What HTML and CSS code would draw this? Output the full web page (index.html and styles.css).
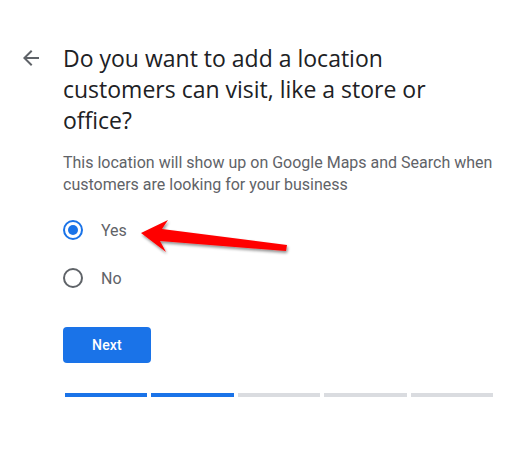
FILE: index.html
```html
<!DOCTYPE html>
<html lang="en">
<head>
<meta charset="utf-8">
<title>Add location</title>
<link rel="stylesheet" href="styles.css">
</head>
<body>
<div class="page">
  <div class="back">
    <svg width="24" height="24" viewBox="0 0 24 24"><path d="M20 11H7.830l5.59-5.59L12 4l-8 8 8 8 1.41-1.41L7.830 13H20v-2z" fill="#5f6368"/></svg>
  </div>
  <div class="content">
    <h1 class="title">Do you want to add a location customers can visit, like a store or office?</h1>
    <p class="subtitle">This location will show up on Google Maps and Search when customers are looking for your business</p>
    <div class="options">
      <label class="option"><span class="radio checked"></span><span class="label">Yes</span></label>
      <label class="option"><span class="radio"></span><span class="label">No</span></label>
    </div>
    <button class="next">Next</button>
    <div class="progress">
      <span class="seg done"></span>
      <span class="seg done"></span>
      <span class="seg"></span>
      <span class="seg"></span>
      <span class="seg"></span>
    </div>
  </div>
</div>
<svg class="annotation" width="518" height="451" viewBox="0 0 518 451">
  <defs>
    <filter id="sh" x="-20%" y="-50%" width="140%" height="200%">
      <feGaussianBlur in="SourceAlpha" stdDeviation="1.5"/>
      <feOffset dx="1" dy="2" result="b"/>
      <feComponentTransfer><feFuncA type="linear" slope="0.45"/></feComponentTransfer>
      <feMerge><feMergeNode/><feMergeNode in="SourceGraphic"/></feMerge>
    </filter>
  </defs>
  <polygon filter="url(#sh)" fill="#ff0000" points="141,233 168,220 162,229 287,245 286,251 160,241 166,252"/>
</svg>
</body>
</html>
```
FILE: styles.css
```css
* { box-sizing: border-box; }
html, body { margin: 0; padding: 0; background: #fff; }
body { font-family: Roboto, "Liberation Sans", Arial, sans-serif; }

.page {
  display: flex;
  padding: 46px 0 0 19px;
}
.back { width: 24px; height: 24px; flex: none; }
.back svg { display: block; }

.content {
  margin-left: 20px;
  margin-top: -3px;
  width: 450px;
}
.title {
  margin: 0;
  font-family: "Open Sans", sans-serif;
  font-weight: 400;
  font-size: 23px;
  line-height: 31px;
  color: #202124;
  width: 420px;
}
.subtitle {
  margin: 16px 0 0;
  font-size: 16px;
  line-height: 22px;
  color: #5f6368;
}
.options {
  margin-top: 10px;
  display: flex;
  flex-direction: column;
}
.option {
  display: flex;
  align-items: center;
  height: 48px;
}
.radio {
  width: 20px;
  height: 20px;
  border: 2px solid #5f6368;
  border-radius: 50%;
  display: flex;
  align-items: center;
  justify-content: center;
  flex: none;
}
.radio.checked { border-color: #1a73e8; }
.radio.checked::after {
  content: "";
  width: 10px;
  height: 10px;
  border-radius: 50%;
  background: #1a73e8;
}
.label {
  margin-left: 18px;
  font-size: 16px;
  color: #5f6368;
}
.next {
  margin-top: 25px;
  width: 88px;
  height: 36px;
  border: none;
  border-radius: 4px;
  background: #1a73e8;
  color: #fff;
  font-family: Roboto, sans-serif;
  font-weight: 500;
  font-size: 14px;
  letter-spacing: 0.2px;
  display: block;
  padding: 0;
}
.progress {
  margin: 30px 0 0 2px;
  width: 428px;
  display: flex;
  gap: 4px;
}
.seg { flex: 1; height: 4px; background: #dadce0; }
.seg.done { background: #1a73e8; }

.annotation {
  position: absolute;
  left: 0;
  top: 0;
  pointer-events: none;
}
```
